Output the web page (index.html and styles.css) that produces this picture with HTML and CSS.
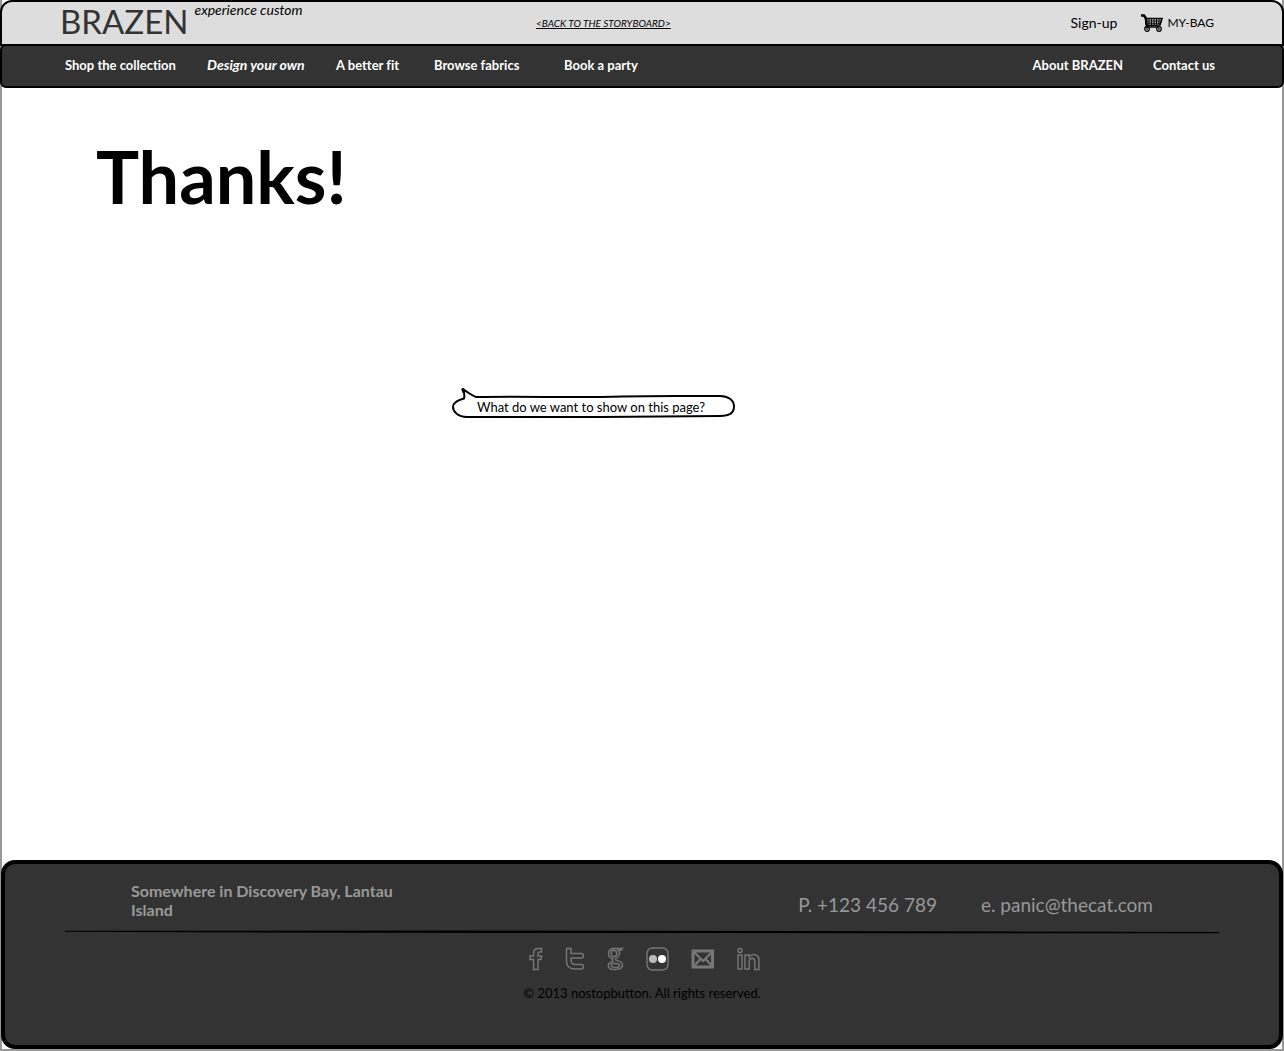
FILE: index.html
```html
<!DOCTYPE html>
<html lang="en">
<head>
<meta charset="utf-8">
<meta name="viewport" content="width=device-width, initial-scale=1">
<title>BRAZEN - Thanks!</title>
<link rel="stylesheet" href="styles.css">
</head>
<body>
<div class="page">
  <header class="topbar">
    <div class="brand">
      <a class="logo" href="#">BRAZEN</a>
      <span class="tagline">experience custom</span>
    </div>
    <a class="back" href="#">&lt;BACK TO THE STORYBOARD&gt;</a>
    <div class="account">
      <a class="signup" href="#">Sign-up</a>
      <a class="bag" href="#">
        <svg width="22" height="18" viewBox="0 0 22 18" fill="none" stroke="#000" aria-hidden="true">
          <path d="M0 1.500h3l2 3 .5 7" stroke-width="2.400"/>
          <path d="M4.500 4.500H21l-2 6.500-13 .5z" stroke-width="1.600"/>
          <path d="M5 7h15M5.500 9.200h14M8 4.500v7M10.500 4.500v7M13 4.500v7M15.500 4.500v7M18 4.500v6.500" stroke-width="1"/>
          <path d="M6 11.500l-1 1.600h13" stroke-width="1.500"/>
          <circle cx="6" cy="15" r="2.300" stroke-width="1.200"/><circle cx="6" cy="15" r=".6" stroke-width=".8"/>
          <circle cx="18" cy="15" r="2.300" stroke-width="1.200"/><circle cx="18" cy="15" r=".6" stroke-width=".8"/>
        </svg>
        <span>MY-BAG</span>
      </a>
    </div>
  </header>
  <nav class="nav">
    <div class="nav-shop">
      <a href="#">Shop the collection</a>
      <a class="current" href="#">Design your own</a>
      <a href="#">A better fit</a>
      <a href="#">Browse fabrics</a>
      <a href="#">Book a party</a>
    </div>
    <div class="nav-info">
      <a href="#">About BRAZEN</a>
      <a href="#">Contact us</a>
    </div>
  </nav>
  <main class="content">
    <h1>Thanks!</h1>
    <div class="bubble">
      <svg width="284" height="32" viewBox="0 0 284 32" fill="#fff" stroke="#000" stroke-width="2" stroke-linejoin="round" aria-hidden="true">
        <path d="M11 2c4 3 8 6 13 8C80 9 120 11 170 9.500c35-1 60-.5 98-.5 8 0 14 4 14 10.500 0 6-5 9.500-14 9.500-40 0-80 .5-120 1H15C6 29.500 1 25 1 20c0-4 3-6.500 11-8.500 1-4 0-6.500-1-9.500z"/>
        <path d="M10.500 1.500l1.500 4" stroke-width="3"/>
      </svg>
      <p>What do we want to show on this page?</p>
    </div>
  </main>
  <footer class="footer">
    <div class="contact">
      <address>Somewhere in Discovery Bay, Lantau Island</address>
      <div class="reach">
        <a href="#">P. +123 456 789</a>
        <a href="#">e. panic@thecat.com</a>
      </div>
    </div>
    <svg class="rule" height="4" viewBox="0 0 1153 4" preserveAspectRatio="none" aria-hidden="true">
      <path d="M0 .8L400 .5 1153 2V3.300L800 3.200 300 2.800 0 1.800z" fill="#000"/>
    </svg>
    <div class="social">
      <a href="#" aria-label="Facebook">
        <svg width="14" height="24" viewBox="0 0 14 24"><path d="M12.500 1.500H9.500C6 1.500 4.500 3.500 4.500 6v3H1v3.500h3.500V22.500H9v-10h3L12.700 9H9V6.500c0-1 .5-1.500 1.500-1.500h2z"/></svg>
      </a>
      <a href="#" aria-label="Twitter">
        <svg width="20" height="24" viewBox="0 0 20 24"><path d="M1.500 1.500H6v5h10.500c2.500 0 2.500 4.500 0 4.500H6v2c0 3 1.500 4.500 4 4.500h6.500c2.500 0 2.500 4.500 0 4.500H9.500C4 22 1.500 19 1.500 13.500z"/></svg>
      </a>
      <a href="#" aria-label="Google">
        <svg width="17" height="24" viewBox="0 0 17 24"><path d="M15.500 1.500H7C3.500 1.500 1.500 3.500 1.500 6.500c0 3 2 4.800 4.500 5-1.500 1.500-1 2.500 0 3.200-3 .5-4.800 2-4.800 4 0 2.500 3 3.800 7 3.800 4.500 0 7.300-1.700 7.300-4.500 0-5-7-3.500-7-5.500 0-1.500 4-2 4-6 0-1.500-.5-2.500-1.300-3.200h3z"/><ellipse cx="7" cy="6.500" rx="2.800" ry="3.200"/><ellipse cx="8.300" cy="18.500" rx="4.300" ry="2"/></svg>
      </a>
      <a href="#" aria-label="Flickr">
        <svg width="23" height="24" viewBox="0 0 23 24"><rect x="1" y="1" width="21" height="22" rx="5.500"/><circle cx="7" cy="12" r="4" fill="#bbb" stroke="none"/><circle cx="16" cy="12" r="4" fill="#fff" stroke="none"/></svg>
      </a>
      <a href="#" aria-label="Email">
        <svg width="24" height="24" viewBox="0 0 24 24"><rect x="2" y="4" width="19.500" height="16" stroke-width="3"/><path d="M3 5l9 9 9-9M3 19l6.500-7M21 19l-6.500-7" stroke-width="2.200"/></svg>
      </a>
      <a href="#" aria-label="LinkedIn">
        <svg width="23" height="24" viewBox="0 0 23 24"><rect x="1" y="8" width="4" height="14"/><rect x="1" y="1.500" width="4" height="4" rx="1.500"/><path d="M8 8h4.200v1.800C13 8.500 14.500 7.500 16.500 7.500c4 0 5.500 2.500 5.500 6v9h-4.200v-8c0-2-.8-3.200-2.500-3.200-2 0-3.100 1.200-3.100 3.400V22H8z"/></svg>
      </a>
    </div>
    <p class="copyright">© 2013 nostopbutton. All rights reserved.</p>
  </footer>
</div>
</body>
</html>
```

FILE: styles.css
```css
* { box-sizing: border-box; }

body {
  margin: 0;
  background: #fff;
  color: #000;
  font: 13px/20px Lato, "Noto Sans", sans-serif;
  font-variant-ligatures: none;
}

a { color: inherit; text-decoration: none; }
h1, p { margin: 0; }
svg { display: block; }

.page {
  display: flex;
  flex-direction: column;
  min-height: 100vh;
  border: solid #999;
  border-width: 0 2px 2px;
}

.topbar, .nav {
  display: flex;
  margin: 0 -2px;
  border: 2px solid #000;
}

.topbar {
  height: 46px;
  padding: 0 68px 0 58px;
  border-radius: 12px 12px 0 0;
  background: #ddd;
}

.brand {
  display: flex;
  flex: 0 0 476px;
  gap: 6px;
}

.logo {
  color: #333;
  font-size: 33px;
  line-height: 38px;
}

.tagline {
  font-size: 14px;
  font-style: italic;
  line-height: 16px;
}

.back {
  align-self: center;
  font-size: 10px;
  font-style: italic;
  text-decoration: underline;
}

.account {
  display: flex;
  align-items: center;
  gap: 24px;
  margin-left: auto;
}

.signup { font-size: 14px; }

.bag {
  display: flex;
  align-items: center;
  gap: 4px;
  font-size: 12px;
}

.nav {
  justify-content: space-between;
  align-items: center;
  height: 44px;
  margin-top: -2px;
  padding: 0 67px 2px 63px;
  border-radius: 6px;
  background: #333;
  color: #fff;
  font-weight: bold;
}

.nav-shop {
  display: grid;
  grid-template-columns: 142px 129px 98px 130px auto;
}

.nav-info { display: flex; gap: 30px; }

.current {
  font-size: 14px;
  font-style: italic;
}

.content {
  flex: 1;
  padding: 44px 94px;
}

h1 {
  font-size: 72px;
  font-weight: bold;
  line-height: 88px;
}

.bubble {
  display: grid;
  width: 284px;
  margin: 167px 0 0 356px;
}

.bubble svg, .bubble p { grid-area: 1 / 1; }

.bubble p {
  position: relative;
  padding: 10px 6px 0 0;
  text-align: center;
}

.footer {
  height: 189px;
  margin: 0 -1px;
  padding: 17px 60px;
  border: 4px solid #000;
  border-radius: 14px;
  background: #333;
}

.contact {
  display: flex;
  justify-content: space-between;
  align-items: center;
  padding: 0 66px;
  color: #999;
}

address {
  width: 280px;
  font-size: 16px;
  font-style: normal;
  font-weight: bold;
  line-height: 19px;
}

.reach {
  display: flex;
  gap: 44px;
  padding-top: 10px;
  font-size: 19px;
}

.rule { width: 100%; margin-top: 11px; }

.social {
  display: flex;
  justify-content: center;
  gap: 22px;
  margin-top: 13px;
  padding-left: 5px;
}

.social svg { fill: none; stroke: #777; stroke-width: 1.4; }

.copyright {
  margin-top: 12px;
  text-align: center;
}
```
